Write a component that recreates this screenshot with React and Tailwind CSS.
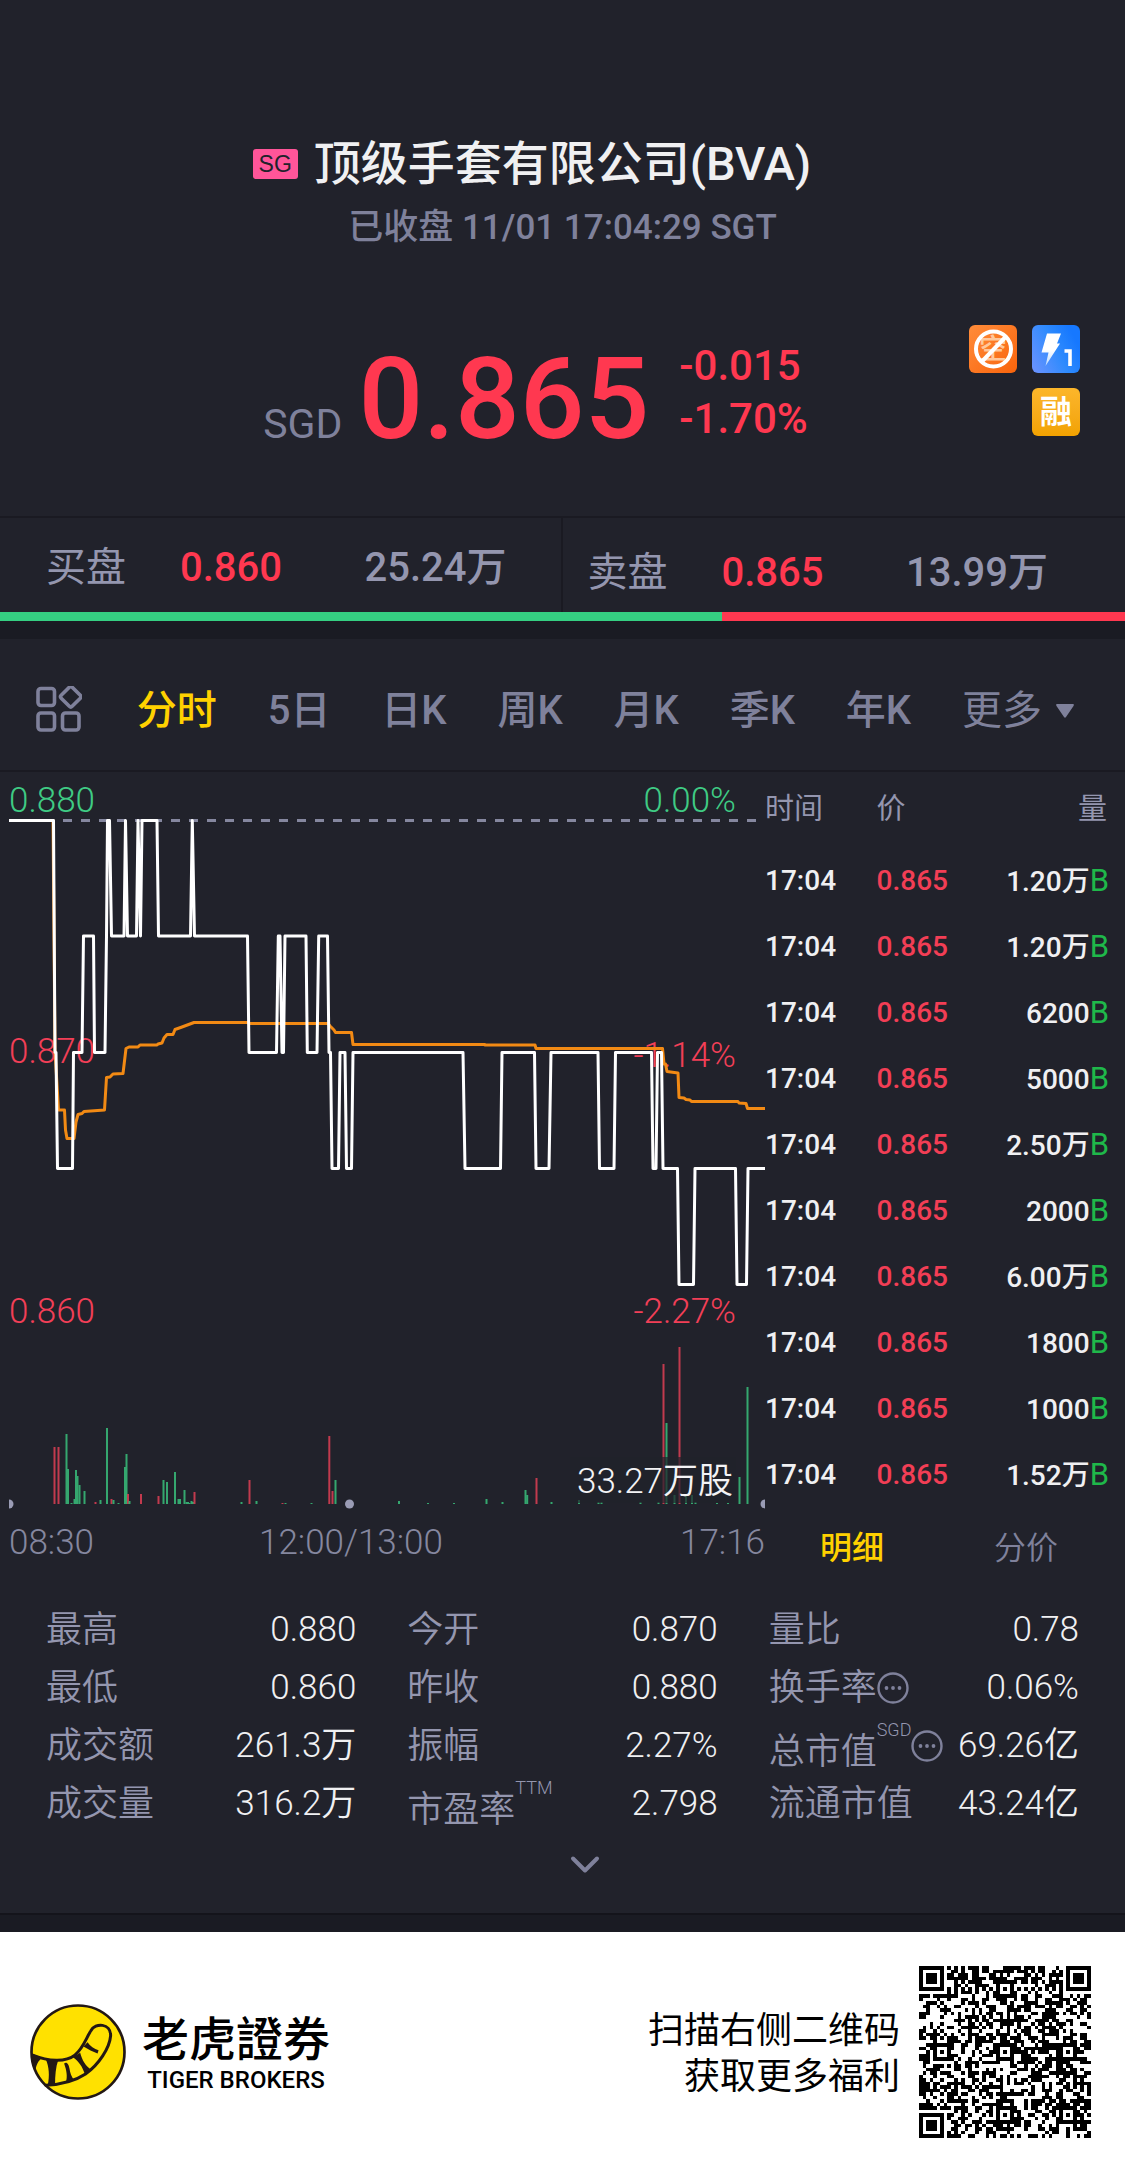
import React from "react";

const FONT = "font-['Roboto','Noto_Sans_CJK_SC',sans-serif]";

const PRICE_PATH =
  "M9 820.5H53.5L55 1052.5H56L57.5 1168.5H72.5L73.5 1052.5H82L83.5 936H93.5L94.5 1052.5H105L106.5 936L107.5 820.5H109.5L111.5 936H124L125.5 820.5L127.5 936H136.5L138 820.5L140.5 936L142 820.5H157L158.5 936H190.5L192.3 820.5L194.5 936H247.5L249 1052.5H276.5L278.3 936H280L282 1052.5H283.5L285 936H306L307.3 1052.5H317L318.7 936H327.5L329 1052.5H330.5L332 1168.5H338.5L340 1052.5H345L346.5 1168.5H351.5L353 1052.5H463L465 1168.5H500.5L502 1052.5H534.5L536 1168.5H549L551 1052.5H598L599.5 1168.5H614L615.5 1052.5H651.5L653 1168.5H656L657.5 1052.5H661.5L663 1168.5H677.5L679 1284.5H693.5L695 1168.5H735.5L737 1284.5H746.5L748 1168.5H765";

const AVERAGE_PATH =
  "M9 820.5H53L55 1050L58.5 1110H64.5L65.5 1130L67 1138.5H74L76 1122L78 1114.5L82 1113.5L84 1111.5L104.5 1110L106.5 1077.5L110 1077L113 1074L123 1073.5L126 1048.5L129 1047H138L140 1045H157L158 1044L162 1043L164 1038L167 1034.5H173L175 1029.5L182 1027L186 1025.5L194 1022.5H248L249 1023.5H328L330 1026L334 1030L335.5 1032.5H351.5L353 1044.5H485V1045H535L536 1048.5H662.5L664 1064H665.5L667 1071.5L678 1073L679 1097.5L684 1098L686 1099.5L690 1100L691.5 1101.5H738L739 1103L746 1103.5L747.5 1108.5H765";

// [x, height, direction]
const VOLUMES = [
  [54, 57, "r"], [58, 57, "r"], [66, 70, "g"], [67.5, 35, "g"], [71, 1, "g"], [74, 5, "g"], [75.5, 34, "g"], [77, 28, "g"],
  [79, 19, "g"], [84, 13, "g"], [95, 2, "r"], [100, 4, "g"], [106.5, 76, "g"], [111, 5, "r"], [113, 4, "g"], [118, 1, "g"],
  [124.5, 37, "g"], [126, 50, "g"], [127.5, 10, "r"], [129, 3, "g"], [140.5, 10, "r"], [158, 8, "r"], [163, 24, "g"], [166.5, 22, "g"],
  [174.5, 32, "g"], [178, 5, "g"], [179.5, 5, "g"], [184, 14, "g"], [186, 2, "g"], [187.5, 2, "g"], [189, 1, "g"], [191, 3, "g"],
  [192.5, 2, "g"], [194, 12, "r"], [241, 2, "g"], [249, 24, "r"], [256, 3, "g"], [282, 1, "r"], [285, 1, "g"], [311, 1, "g"],
  [328.8, 68, "r"], [332, 13, "r"], [335, 24, "g"], [398.5, 3, "g"], [427.5, 1, "g"], [453.5, 1, "g"], [486, 5, "g"], [502, 2, "g"],
  [525, 14, "g"], [526.7, 9, "g"], [536, 26, "r"], [551, 2, "g"], [578.5, 4, "g"], [598, 2, "g"], [601, 2, "g"], [640, 2, "g"],
  [658, 2, "g"], [663, 140, "r"], [666, 81, "g"], [674, 9, "g"], [679, 157, "r"], [685.5, 9, "g"], [691.5, 9, "g"], [695, 2, "g"],
  [716.5, 1, "g"], [727.5, 1, "g"], [739, 27, "g"], [747, 117, "g"],
];

const TRADES = ["1.20万", "1.20万", "6200", "5000", "2.50万", "2000", "6.00万", "1800", "1000", "1.52万"];

const PERIODS = ["分时", "5日", "日K", "周K", "月K", "季K", "年K"];

const STATS = [
  { label: "最高", value: "0.880" },
  { label: "今开", value: "0.870" },
  { label: "量比", value: "0.78" },
  { label: "最低", value: "0.860" },
  { label: "昨收", value: "0.880" },
  { label: "换手率", value: "0.06%", info: true },
  { label: "成交额", value: "261.3万" },
  { label: "振幅", value: "2.27%" },
  { label: "总市值", value: "69.26亿", sup: "SGD", info: true },
  { label: "成交量", value: "316.2万" },
  { label: "市盈率", value: "2.798", sup: "TTM" },
  { label: "流通市值", value: "43.24亿" },
];

function buildQr() {
  const n = 49;
  const grid = [];
  let seed = 20231;
  for (let y = 0; y < n; y++) {
    grid.push([]);
    for (let x = 0; x < n; x++) {
      seed = (seed * 1103515245 + 12345) % 2147483648;
      grid[y].push((seed >> 16) % 100 < 50);
    }
  }
  const square = (cx, cy, radius, quiet) => {
    for (let dy = -radius - quiet; dy <= radius + quiet; dy++) {
      for (let dx = -radius - quiet; dx <= radius + quiet; dx++) {
        const x = cx + dx;
        const y = cy + dy;
        if (x < 0 || y < 0 || x >= n || y >= n) continue;
        const d = Math.max(Math.abs(dx), Math.abs(dy));
        grid[y][x] = radius === 3 ? d === 3 || d <= 1 : d === 2 || d === 0;
      }
    }
  };
  for (let i = 8; i < n - 8; i++) {
    grid[6][i] = i % 2 === 0;
    grid[i][6] = i % 2 === 0;
  }
  [[24, 6], [6, 24], [24, 24], [42, 24], [24, 42], [42, 42]].forEach(([x, y]) => square(x, y, 2, 0));
  [[3, 3], [n - 4, 3], [3, n - 4]].forEach(([x, y]) => square(x, y, 3, 1));
  let d = "";
  grid.forEach((row, y) => row.forEach((on, x) => { if (on) d += `M${x} ${y}h1v1h-1z`; }));
  return d;
}

const QR_PATH = buildQr();

function Badges() {
  return (
    <div className="grid grid-cols-2 gap-[15px]">
      <svg viewBox="0 0 48 48" className="size-12 rounded-md" role="img" aria-label="禁止卖空">
        <defs>
          <linearGradient id="orange" x1="0" y1="0" x2="1" y2="1">
            <stop offset="0" stopColor="#ff8c3a" />
            <stop offset="1" stopColor="#f9640c" />
          </linearGradient>
        </defs>
        <rect width="48" height="48" fill="url(#orange)" />
        <text x="24" y="34" textAnchor="middle" fontSize="28" fill="#ffc79b" className="font-['Noto_Sans_CJK_SC',sans-serif] font-medium">空</text>
        <circle cx="24.500" cy="24" r="17.500" fill="none" stroke="#fff" strokeWidth="4" />
        <path d="M12.500 37L36.500 12" stroke="#fff" strokeWidth="4" />
      </svg>
      <svg viewBox="0 0 48 48" className="size-12 rounded-md" role="img" aria-label="Level 1">
        <defs>
          <linearGradient id="blue" x1="0" y1="1" x2="1" y2="0.500">
            <stop offset="0" stopColor="#6e93ff" />
            <stop offset="0.600" stopColor="#2f8bfd" />
            <stop offset="1" stopColor="#1678ff" />
          </linearGradient>
          <linearGradient id="bolt" x1="0" y1="0" x2="0" y2="1">
            <stop offset="0.500" stopColor="#fff" />
            <stop offset="1" stopColor="#b9d9ff" />
          </linearGradient>
        </defs>
        <rect width="48" height="48" fill="url(#blue)" />
        <path d="M15 8.500H29L25 18.500H28L13.500 41L16.500 27.500H9.500Z" fill="url(#bolt)" />
        <path d="M32.500 26H38V41" fill="none" stroke="#fff" strokeWidth="3.600" />
      </svg>
      <span className="col-start-2 flex size-12 items-center justify-center rounded-md bg-linear-to-b from-[#fcb62a] to-[#f2a200] text-[32px] leading-none font-bold text-white">融</span>
    </div>
  );
}

function Chart() {
  return (
    <svg viewBox="9 772 756 798" className={`block w-full ${FONT}`} role="img" aria-label="分时走势图">
      <g fontSize="35" className="font-light">
        <text x="9" y="812" fill="#3fcb84">0.880</text>
        <text x="736" y="812" textAnchor="end" fill="#3fcb84">0.00%</text>
        <text x="9" y="1063" fill="#f23f57">0.870</text>
        <text x="736" y="1067" textAnchor="end" fill="#f23f57">-1.14%</text>
        <text x="9" y="1323" fill="#f23f57">0.860</text>
        <text x="736" y="1323" textAnchor="end" fill="#f23f57">-2.27%</text>
        <g fill="#85879f">
          <text x="9" y="1554">08:30</text>
          <text x="351" y="1554" textAnchor="middle">12:00/13:00</text>
          <text x="765" y="1554" textAnchor="end">17:16</text>
        </g>
      </g>
      <path d="M63 820.500H765" stroke="#85879f" strokeWidth="3" strokeDasharray="9 9" />
      <path d={AVERAGE_PATH} fill="none" stroke="#f28a14" strokeWidth="3" strokeLinejoin="round" />
      <path d={PRICE_PATH} fill="none" stroke="#fff" strokeWidth="3" strokeLinejoin="round" />
      {VOLUMES.map(([x, h, c]) => (
        <rect key={x} x={x - 0.5} y={1504 - h} width="2" height={h} fill={c === "r" ? "#c23a4e" : "#35a76f"} />
      ))}
      <rect x="570" y="1457" width="166" height="46" fill="#21222b" fillOpacity="0.700" />
      <text x="577" y="1493" fontSize="35" fill="#f3f3f5" className="font-[350]">33.27万股</text>
      <g fill="#9a9cb5">
        <circle cx="9" cy="1504" r="4.500" />
        <circle cx="349.500" cy="1504" r="4.500" />
        <circle cx="765" cy="1504" r="4.500" />
      </g>
    </svg>
  );
}

function InfoButton() {
  return (
    <button type="button" aria-label="说明">
      <svg viewBox="0 0 32 32" className="block size-8" fill="#7f819b">
        <circle cx="16" cy="16" r="14.500" fill="none" stroke="#7f819b" strokeWidth="2.400" />
        <circle cx="9.500" cy="16" r="1.900" />
        <circle cx="16" cy="16" r="1.900" />
        <circle cx="22.500" cy="16" r="1.900" />
      </svg>
    </button>
  );
}

function TigerLogo() {
  return (
    <svg viewBox="90 131 287 287" className="size-24" role="img" aria-label="老虎證券">
      <circle cx="233.500" cy="274.500" r="139" fill="#ffe100" stroke="#231815" strokeWidth="8" />
      <g stroke="#231815" strokeWidth="9" fill="none" strokeLinecap="round" strokeLinejoin="round">
        <path d="M98 284C145 303 197 306 224 284C250 262 258 232 272 211C285 186 332 188 331 226C328 262 296 312 256 340C226 360 188 371 137 374" />
      </g>
      <g fill="#231815">
        <path d="M96 280L126 292C114 302 108 314 106 332C98 316 95 300 96 280Z" />
        <path d="M137 296L174 300C167 320 165 345 165 372L143 374C149 345 147 318 137 296Z" />
        <path d="M192 309C200 302 206 312 208 324C210 338 214 348 221 358L197 366C203 348 199 328 192 309Z" />
        <path d="M218 290L240 277C246 300 256 316 271 326L254 341C247 318 236 302 218 290Z" />
        <path d="M250 258L262 245C270 258 282 264 295 269L292 279C278 274 264 266 250 258Z" />
      </g>
    </svg>
  );
}

export default function App() {
  return (
    <main lang="zh-CN" className={`w-full bg-[#21222b] text-[#7f819b] ${FONT}`}>
      <header className="border-b-2 border-[#1a1a22] pt-[130px] pb-[60px]">
        <div className="grid grid-cols-[1fr_auto_1fr] items-center gap-4">
          <span className="flex h-[30px] w-[45px] items-center justify-center justify-self-end rounded-[3px] bg-[#ff5599] font-['Liberation_Sans',sans-serif] text-[23px] leading-none text-[#21222b]">SG</span>
          <h1 className="text-[47px] leading-[68px] font-medium text-[#f0f0f2]">顶级手套有限公司(BVA)</h1>
        </div>
        <p className="mt-1 text-center text-[35px] leading-[52px] font-medium">已收盘 11/01 17:04:29 SGT</p>
        <div className="mt-[71px] flex items-start pr-[45px] pl-[23.4%]">
          <div className="mt-[17px] flex items-baseline gap-4">
            <span className="text-[41px] leading-none">SGD</span>
            <strong className="text-[114px] leading-none font-medium text-[#ff3850]">0.865</strong>
          </div>
          <div className="mt-[14px] ml-[30px] flex flex-col text-[42px] leading-[53px] font-medium text-[#ff3850]">
            <span>-0.015</span>
            <span>-1.70%</span>
          </div>
          <div className="ml-auto">
            <Badges />
          </div>
        </div>
      </header>

      <section className="grid grid-cols-2 text-[40px] leading-[50px] text-[#9496af]">
        <div className="flex items-start border-r-2 border-[#1a1a22] pt-[25px] pr-[54px] pl-[46px]">
          <span>买盘</span>
          <span className="ml-[54px] font-medium text-[#ff3850]">0.860</span>
          <span className="ml-auto font-medium">25.24万</span>
        </div>
        <div className="flex items-start pt-[30px] pr-[77px] pb-[14px] pl-[25px]">
          <span>卖盘</span>
          <span className="ml-[54px] font-medium text-[#ff3850]">0.865</span>
          <span className="ml-auto font-medium">13.99万</span>
        </div>
      </section>
      <div className="flex h-[9px] bg-[#ff3850]">
        <div className="w-[64.2%] bg-[#35cf82]" />
      </div>
      <div className="h-[18px] bg-[#1a1b23]" />

      <nav className="flex items-center justify-between border-b-2 border-[#1a1a22] pt-11 pr-[51px] pb-[31px] pl-9 text-[40px] leading-[56px]">
        <button type="button" aria-label="图表布局" className="mr-1 pb-1">
          <svg viewBox="0 0 46 46" className="block size-[46px]" fill="none" stroke="#7f819b" strokeWidth="3.600">
            <rect x="2" y="2.500" width="16.500" height="17" rx="3" />
            <rect x="2" y="27" width="16.500" height="17" rx="3" />
            <rect x="26.500" y="27" width="16.500" height="17" rx="3" />
            <rect x="27" y="3" width="15.500" height="15.500" rx="2" transform="rotate(45 34.750 10.750)" />
          </svg>
        </button>
        {PERIODS.map((p, i) => (
          <button key={p} type="button" className={i === 0 ? "font-medium text-[#ffd100]" : "font-medium"}>{p}</button>
        ))}
        <button type="button" className="flex items-center gap-[14px]">
          更多
          <svg viewBox="0 0 18 14" className="h-[14px] w-[18px]" fill="#7f819b"><path d="M1 0H17Q18.500 0 17.500 2L10 13Q9 14.500 8 13L0.500 2Q-0.500 0 1 0Z" /></svg>
        </button>
      </nav>

      <section className="grid grid-cols-[756fr_360fr] pl-[9px]">
        <Chart />
        <div>
          <table className="w-full table-fixed">
            <thead>
              <tr className="h-[76px] text-[29px] text-[#9496af]">
                <th className="w-[31%] text-left font-normal">时间</th>
                <th className="w-[28%] text-left font-normal">价</th>
                <th className="pr-[18px] text-right font-normal">量</th>
              </tr>
            </thead>
            <tbody>
              {TRADES.map((volume, i) => (
                <tr key={i} className="h-[66px] text-[28px] leading-[30px] font-medium">
                  <td className="text-[#f0f0f2]">17:04</td>
                  <td className="text-[#f23e55]">0.865</td>
                  <td className="pr-4 text-right whitespace-nowrap text-[#f0f0f2]">
                    {volume}<span className="text-[31px] leading-none font-normal text-[#1fb84a]">B</span>
                  </td>
                </tr>
              ))}
            </tbody>
          </table>
          <div className="flex pr-3 text-[32px] leading-[80px]">
            <button type="button" className="flex-1 font-medium text-[#ffd100]">明细</button>
            <button type="button" className="flex-1 font-[350]">分价</button>
          </div>
        </div>
      </section>

      <dl className="mt-[13px] grid grid-cols-3 gap-x-[51px] px-[46px] text-[35px] leading-[58px] font-[350]">
        {STATS.map(({ label, value, sup, info }) => (
          <div key={label} className="flex h-[58px] items-center">
            <dt className="flex items-center text-[36px] text-[#9496af]">
              <span className={sup ? "pt-3" : ""}>{label}</span>
              {sup && <sup className="mt-[18px] self-start text-[18px] leading-5">{sup}</sup>}
              {info && <InfoButton />}
            </dt>
            <dd className="ml-auto text-[#f0f0f2]">{value}</dd>
          </div>
        ))}
      </dl>
      <div className="flex justify-center border-b-2 border-[#14141b] pt-[22px] pb-[38px] pl-[45px]">
        <button type="button" aria-label="展开">
          <svg viewBox="0 0 32 20" className="block h-5 w-8" fill="none" stroke="#7f819b" strokeWidth="4" strokeLinecap="round" strokeLinejoin="round"><path d="M4 3.500L16 15.500L28 3.500" /></svg>
        </button>
      </div>
      <div className="h-[17px] bg-[#1a1b23]" />

      <footer className="flex items-center bg-white py-[34px] pr-[34px] pl-[30px] text-black">
        <TigerLogo />
        <div className="ml-4 text-center">
          <div className="font-['Noto_Sans_CJK_TC',sans-serif] text-[47px] leading-[56px] font-medium">老虎證券</div>
          <div className="text-2xl leading-8 font-medium">TIGER BROKERS</div>
        </div>
        <p className="ml-auto pt-1 text-right text-[36px] leading-[46px]">扫描右侧二维码<br />获取更多福利</p>
        <svg viewBox="0 0 49 49" className="ml-[19px] size-[172px]" shapeRendering="crispEdges" role="img" aria-label="二维码"><path d={QR_PATH} /></svg>
      </footer>
    </main>
  );
}
